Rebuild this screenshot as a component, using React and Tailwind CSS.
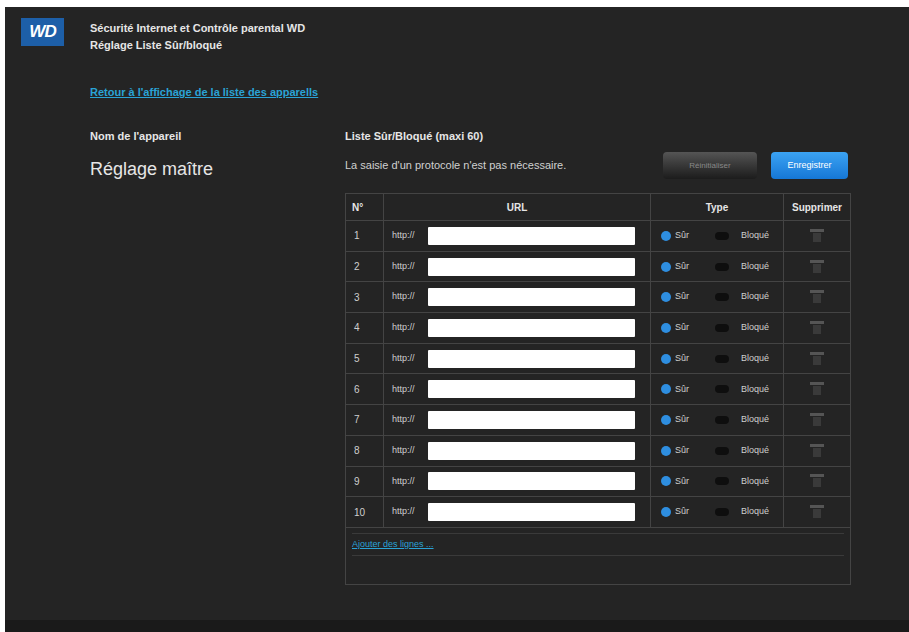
export default function App() {
  const rows = Array.from({ length: 10 }, (_, i) => i + 1);
  return (
    <div className="w-[909px] h-[632px] bg-white pt-[7px] pl-[5px] overflow-hidden" style={{ fontFamily: '"Liberation Sans", Arial, sans-serif' }}>
      <div className="w-[904px] h-[625px] bg-[#242424] flex flex-col">
        <div className="flex-1">
          <div className="flex pt-[11px] pl-[16px]">
            <div className="w-[43px] h-[28px] bg-[#1d5fa8] flex items-center justify-center text-white font-bold italic text-[17px] tracking-tighter">WD</div>
            <div className="ml-[26px] pt-[2px] text-[#e6e6e6] font-bold text-[11px] leading-[17px]">
              <div>Sécurité Internet et Contrôle parental WD</div>
              <div>Réglage Liste Sûr/bloqué</div>
            </div>
          </div>
          <div className="pl-[85px] mt-[30px] text-[11px] font-bold text-[#2aa3d6] underline">Retour à l'affichage de la liste des apparells</div>
          <div className="flex mt-[27px] pl-[85px]">
            <div className="w-[255px]">
              <div className="text-[11px] font-bold text-[#e6e6e6]">Nom de l'appareil</div>
              <div className="text-[18px] text-[#e6e6e6] mt-[12px]">Réglage maître</div>
            </div>
            <div className="w-[506px]">
              <div className="text-[11px] font-bold text-[#e6e6e6]">Liste Sûr/Bloqué (maxi 60)</div>
              <div className="flex items-center mt-[8px]">
                <div className="text-[11px] text-[#d0d0d0] w-[318px]">La saisie d'un protocole n'est pas nécessaire.</div>
                <div className="w-[94px] h-[27px] bg-gradient-to-b from-[#555] to-[#1c1c1c] rounded-sm flex items-center justify-center text-[8px] text-[#888]">Réinitialiser</div>
                <div className="ml-[14px] w-[77px] h-[27px] bg-gradient-to-b from-[#3ba3f3] to-[#1577d6] rounded-sm flex items-center justify-center text-[9px] text-white">Enregistrer</div>
              </div>
              <div className="mt-[14px] border border-[#444] w-[506px]">
                <div className="flex h-[27px] text-[10px] font-bold text-[#e6e6e6] border-b border-[#444]">
                  <div className="w-[38px] flex items-center pl-[6px] border-r border-[#444]">N°</div>
                  <div className="w-[267px] flex items-center justify-center border-r border-[#444]">URL</div>
                  <div className="w-[133px] flex items-center justify-center border-r border-[#444]">Type</div>
                  <div className="flex-1 flex items-center justify-center">Supprimer</div>
                </div>
                {rows.map((n) => (
                  <div key={n} className="flex h-[30.7px] text-[9px] text-[#cfcfcf] border-b border-[#444]">
                    <div className="w-[38px] flex items-center pl-[8px] border-r border-[#444] text-[10px]">{n}</div>
                    <div className="w-[267px] flex items-center pl-[8px] border-r border-[#444]">
                      <span className="w-[36px]">http://</span>
                      <div className="w-[207px] h-[18px] bg-white rounded-[1px]" />
                    </div>
                    <div className="w-[133px] flex items-center pl-[10px] border-r border-[#444]">
                      <span className="w-[10px] h-[10px] rounded-full bg-[#2e8ee0] mr-[4px]" />
                      <span className="w-[40px]">Sûr</span>
                      <span className="w-[14px] h-[8px] rounded-full bg-[#0e0e0e] mr-[12px]" />
                      <span>Bloqué</span>
                    </div>
                    <div className="flex-1 flex items-center justify-center">
                      <div className="w-[20px] h-[14px] flex flex-col items-center">
                        <div className="w-[14px] h-[3px] bg-[#555]" />
                        <div className="w-[8px] h-[9px] bg-[#3a3a3a] mt-[1px]" />
                      </div>
                    </div>
                  </div>
                ))}
                <div className="h-[56px] px-[6px] pt-[5px]">
                  <div className="border-t border-b border-[#3a3a3a] py-[4px] text-[9px] text-[#2aa3d6] underline">Ajouter des lignes ...</div>
                </div>
              </div>
            </div>
          </div>
        </div>
        <div className="h-[12px] bg-[#1a1a1a]" />
      </div>
    </div>
  );
}
